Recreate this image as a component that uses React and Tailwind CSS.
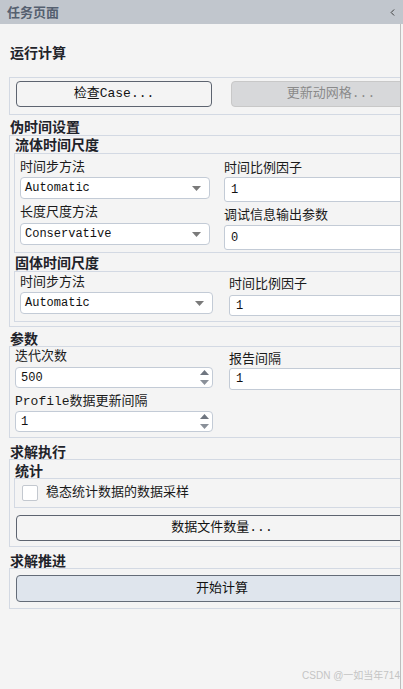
import { ChevronLeft } from "lucide-react";

const FONT = {
  fontFamily: '"Liberation Mono", "Noto Sans CJK SC", monospace',
};

const SelectBox = ({ value, width = "w-[190px]" }) => (
  <div
    className={`${width} h-[22px] bg-white border border-[#c3cbd6] rounded-[4px] flex items-center justify-between pl-[4px] pr-[8px] text-[12px] text-[#111]`}
  >
    <span>{value}</span>
    <svg width="9" height="5" viewBox="0 0 9 5">
      <polygon points="0,0 9,0 4.5,5" fill="#7a7a7a" />
    </svg>
  </div>
);

const TextBox = ({ value, height = "h-[25px]" }) => (
  <div
    className={`w-[200px] ${height} bg-white border border-[#c3cbd6] rounded-[3px] flex items-center pl-[6px] text-[12px] text-[#111]`}
  >
    {value}
  </div>
);

const SpinBox = ({ value }) => (
  <div className="w-[198px] h-[21px] bg-white border border-[#c3cbd6] rounded-[4px] flex items-center justify-between pl-[5px] pr-[3px] text-[12px] text-[#111]">
    <span>{value}</span>
    <div className="flex flex-col gap-[5px]">
      <svg width="9" height="5" viewBox="0 0 9 5">
        <polygon points="0,5 9,5 4.5,0" fill="#6f7680" />
      </svg>
      <svg width="9" height="5" viewBox="0 0 9 5">
        <polygon points="0,0 9,0 4.5,5" fill="#8a9099" />
      </svg>
    </div>
  </div>
);

const Label = ({ children, className = "" }) => (
  <div className={`text-[13px] leading-[16px] text-[#1a1a1a] ${className}`}>
    {children}
  </div>
);

const Heading = ({ children, className = "" }) => (
  <div
    className={`text-[14px] font-bold text-[#1f232a] ${className}`}
    style={{ fontFamily: '"Noto Sans CJK SC", sans-serif' }}
  >
    {children}
  </div>
);

export default function App() {
  return (
    <div
      className="relative w-[403px] h-[689px] bg-[#f4f4f4] flex flex-col overflow-hidden"
      style={FONT}
    >
      {/* header */}
      <div className="h-[24px] shrink-0 bg-[#c1c6cd] flex items-center justify-between pl-[7px] pr-[5px]">
        <span
          className="text-[13px] font-bold text-[#556070]"
          style={{ fontFamily: '"Noto Sans CJK SC", sans-serif' }}
        >
          任务页面
        </span>
        <ChevronLeft size={11} strokeWidth={2} className="text-[#333]" />
      </div>

      <div className="flex-1 flex">
        <div className="w-[401px] overflow-hidden border-r border-[#bdbdbd]">
          <div className="w-[440px]">
            <Heading className="mt-[19px] ml-[10px] leading-[18px]">运行计算</Heading>

            {/* run box */}
            <div className="mt-[16px] ml-[9px] h-[38px] border border-[#d3d9e3] flex items-start pt-[3px] pl-[6px]">
              <button className="w-[196px] h-[26px] rounded-[4px] border border-[#5d6470] text-[13px] text-[#111] flex items-center justify-center">
                检查Case...
              </button>
              <button className="ml-[19px] w-[200px] h-[26px] rounded-[4px] border border-[#c8c8c8] bg-[#d7d8da] text-[13px] text-[#8a8a8a] flex items-center justify-center">
                更新动网格...
              </button>
            </div>

            <Heading className="mt-[3px] ml-[10px] leading-[17px]">伪时间设置</Heading>

            {/* pseudo time box */}
            <div className="ml-[9px] h-[192px] border border-[#d3d9e3] pl-[4px]">
              <Heading className="pl-[1px] leading-[17px]">流体时间尺度</Heading>
              <div className="h-[100px] border border-[#d3d9e3] flex">
                <div className="ml-[5px] w-[190px] pt-[6px]">
                  <Label>时间步方法</Label>
                  <div className="mt-[1px]">
                    <SelectBox value="Automatic" />
                  </div>
                  <Label className="mt-[6px]">长度尺度方法</Label>
                  <div className="mt-[2px]">
                    <SelectBox value="Conservative" />
                  </div>
                </div>
                <div className="ml-[14px] pt-[7px]">
                  <Label>时间比例因子</Label>
                  <TextBox value="1" />
                  <Label className="mt-[6px]">调试信息输出参数</Label>
                  <div className="mt-[1px]">
                    <TextBox value="0" />
                  </div>
                </div>
              </div>

              <Heading className="mt-[1px] pl-[1px] leading-[17px]">固体时间尺度</Heading>
              <div className="h-[51px] border border-[#d3d9e3] flex">
                <div className="ml-[5px] w-[193px] pt-[3px]">
                  <Label>时间步方法</Label>
                  <div className="mt-[1px]">
                    <SelectBox value="Automatic" width="w-[193px]" />
                  </div>
                </div>
                <div className="ml-[16px] pt-[5px]">
                  <Label>时间比例因子</Label>
                  <div className="mt-[2px]">
                    <TextBox value="1" height="h-[21px]" />
                  </div>
                </div>
              </div>
            </div>

            <Heading className="mt-[3px] ml-[10px] leading-[16px]">参数</Heading>

            {/* params box */}
            <div className="ml-[9px] h-[92px] border border-[#d3d9e3] flex">
              <div className="ml-[5px] w-[198px] pt-[2px]">
                <Label>迭代次数</Label>
                <div className="mt-[2px]">
                  <SpinBox value="500" />
                </div>
                <Label className="mt-[6px]">Profile数据更新间隔</Label>
                <div className="mt-[1px]">
                  <SpinBox value="1" />
                </div>
              </div>
              <div className="ml-[16px] pt-[5px]">
                <Label>报告间隔</Label>
                <TextBox value="1" height="h-[22px]" />
              </div>
            </div>

            <Heading className="mt-[6px] ml-[10px] leading-[15px]">求解执行</Heading>

            {/* solve box */}
            <div className="ml-[9px] h-[88px] border border-[#d3d9e3] pl-[4px]">
              <Heading className="pt-[3px] pl-[1px] leading-[15px]">统计</Heading>
              <div className="h-[30px] border border-[#d3d9e3] flex items-center">
                <div className="ml-[7px] w-[16px] h-[16px] bg-white border border-[#c3c8cf] rounded-[2px]" />
                <Label className="ml-[8px]">稳态统计数据的数据采样</Label>
              </div>
              <button className="mt-[7px] ml-[2px] w-[412px] h-[26px] rounded-[4px] border border-[#5d6470] text-[13px] text-[#111] flex items-center justify-center">
                数据文件数量...
              </button>
            </div>

            <Heading className="mt-[6px] ml-[10px] leading-[15px]">求解推进</Heading>

            <div className="ml-[9px] h-[41px] border border-[#d3d9e3] pl-[6px] pt-[6px]">
              <button className="w-[412px] h-[27px] rounded-[4px] border border-[#646c78] bg-[#dfe5ed] text-[13px] text-[#111] flex items-center justify-center">
                开始计算
              </button>
            </div>
          </div>
        </div>
      </div>

      <div
        className="absolute right-[3px] bottom-[6px] text-[10px] text-[#c4c4c4]"
        style={{ fontFamily: '"Liberation Sans", "Noto Sans CJK SC", sans-serif' }}
      >
        CSDN @一如当年714
      </div>
    </div>
  );
}
